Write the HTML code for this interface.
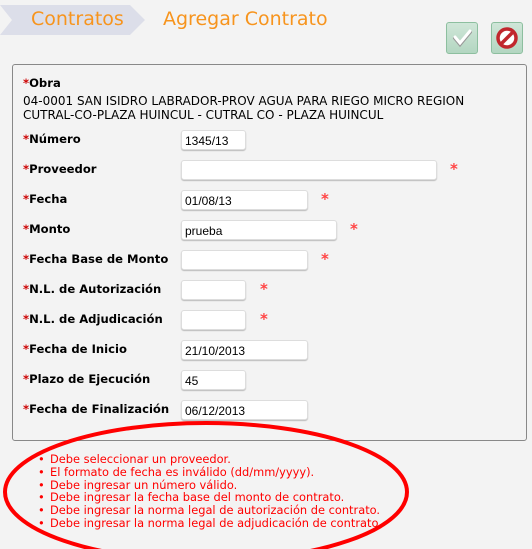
<!DOCTYPE html>
<html><head><meta charset="utf-8"><style>
body{margin:0;width:532px;height:549px;background:#f3f3f3;font-family:"DejaVu Sans",Verdana,sans-serif;position:relative;overflow:hidden}
.a{position:absolute}
.bc{left:0;top:5px;width:145px;height:30px;background:#dcdee9;clip-path:polygon(0 0,130px 0,145px 15px,130px 30px,0 30px,12px 15px)}
.t{color:#f7941d;font-size:19px;top:8px}
.btn{width:30px;height:30px;border:1px solid #8dbf9f;border-radius:3px;background:linear-gradient(#cfe6d8,#b3d6c1);top:22px}
.box{left:12px;top:64px;width:513px;height:375px;border:1px solid #888;border-radius:3px}
.lb{left:23px;font-size:11.6px;font-weight:bold;color:#000}
.lb b{color:#c00}
.in{left:181px;height:20px;border:1px solid #ddd;border-radius:3px;background:#fff;box-shadow:0 1px 1px #bbb;font-family:"Liberation Sans",Arial,sans-serif;font-size:12px;line-height:20px;padding-left:3px;box-sizing:border-box}
.st{color:#f44;font-size:15px;font-weight:bold}
.err{left:50px;top:453px;color:#f00;font-size:11.4px;line-height:12.8px;margin:0;padding:0;list-style:none}
.err li:before{content:"•";position:absolute;left:-12px}
</style></head><body>
<div class="a bc"></div>
<div class="a t" style="left:31px">Contratos</div>
<div class="a t" style="left:163px">Agregar Contrato</div>
<div class="a btn" style="left:446px"><svg width="30" height="30"><path d="M8 15 L13 21 L23 9" stroke="#999" stroke-width="4" fill="none" stroke-linecap="round"/><path d="M8 14 L13 20 L23 8" stroke="#fff" stroke-width="3" fill="none" stroke-linecap="round"/></svg></div>
<div class="a btn" style="left:491px"><svg width="30" height="30"><circle cx="15" cy="15" r="9" fill="#fff" stroke="#c1272d" stroke-width="3.5"/><path d="M9 21 L21 9" stroke="#c1272d" stroke-width="3.5"/></svg></div>
<div class="a box"></div>
<div class="a lb" style="top:76px"><b>*</b>Obra</div>
<div class="a" style="left:23px;top:94px;font-size:12px;line-height:14px">04-0001 SAN ISIDRO LABRADOR-PROV AGUA PARA RIEGO MICRO REGION<br>CUTRAL-CO-PLAZA HUINCUL - CUTRAL CO - PLAZA HUINCUL</div>

<div class="a lb" style="top:132px"><b>*</b>Número</div>
<div class="a in" style="top:130px;width:65px">1345/13</div>
<div class="a lb" style="top:162px"><b>*</b>Proveedor</div>
<div class="a in" style="top:160px;width:256px"></div><div class="a st" style="left:450px;top:160px">*</div>
<div class="a lb" style="top:192px"><b>*</b>Fecha</div>
<div class="a in" style="top:190px;width:127px">01/08/13</div><div class="a st" style="left:321px;top:190px">*</div>
<div class="a lb" style="top:222px"><b>*</b>Monto</div>
<div class="a in" style="top:220px;width:156px">prueba</div><div class="a st" style="left:350px;top:220px">*</div>
<div class="a lb" style="top:252px"><b>*</b>Fecha Base de Monto</div>
<div class="a in" style="top:250px;width:127px"></div><div class="a st" style="left:321px;top:250px">*</div>
<div class="a lb" style="top:282px"><b>*</b>N.L. de Autorización</div>
<div class="a in" style="top:280px;width:65px"></div><div class="a st" style="left:260px;top:280px">*</div>
<div class="a lb" style="top:312px"><b>*</b>N.L. de Adjudicación</div>
<div class="a in" style="top:310px;width:65px"></div><div class="a st" style="left:260px;top:310px">*</div>
<div class="a lb" style="top:342px"><b>*</b>Fecha de Inicio</div>
<div class="a in" style="top:340px;width:127px">21/10/2013</div>
<div class="a lb" style="top:372px"><b>*</b>Plazo de Ejecución</div>
<div class="a in" style="top:370px;width:65px">45</div>
<div class="a lb" style="top:402px"><b>*</b>Fecha de Finalización</div>
<div class="a in" style="top:400px;width:127px">06/12/2013</div>

<ul class="a err">
<li>Debe seleccionar un proveedor.</li>
<li>El formato de fecha es inválido (dd/mm/yyyy).</li>
<li>Debe ingresar un número válido.</li>
<li>Debe ingresar la fecha base del monto de contrato.</li>
<li>Debe ingresar la norma legal de autorización de contrato.</li>
<li>Debe ingresar la norma legal de adjudicación de contrato.</li>
</ul>
<svg class="a" style="left:0;top:0" width="532" height="549"><ellipse cx="206" cy="492" rx="201" ry="69" fill="none" stroke="#f00" stroke-width="4"/></svg>
</body></html>
